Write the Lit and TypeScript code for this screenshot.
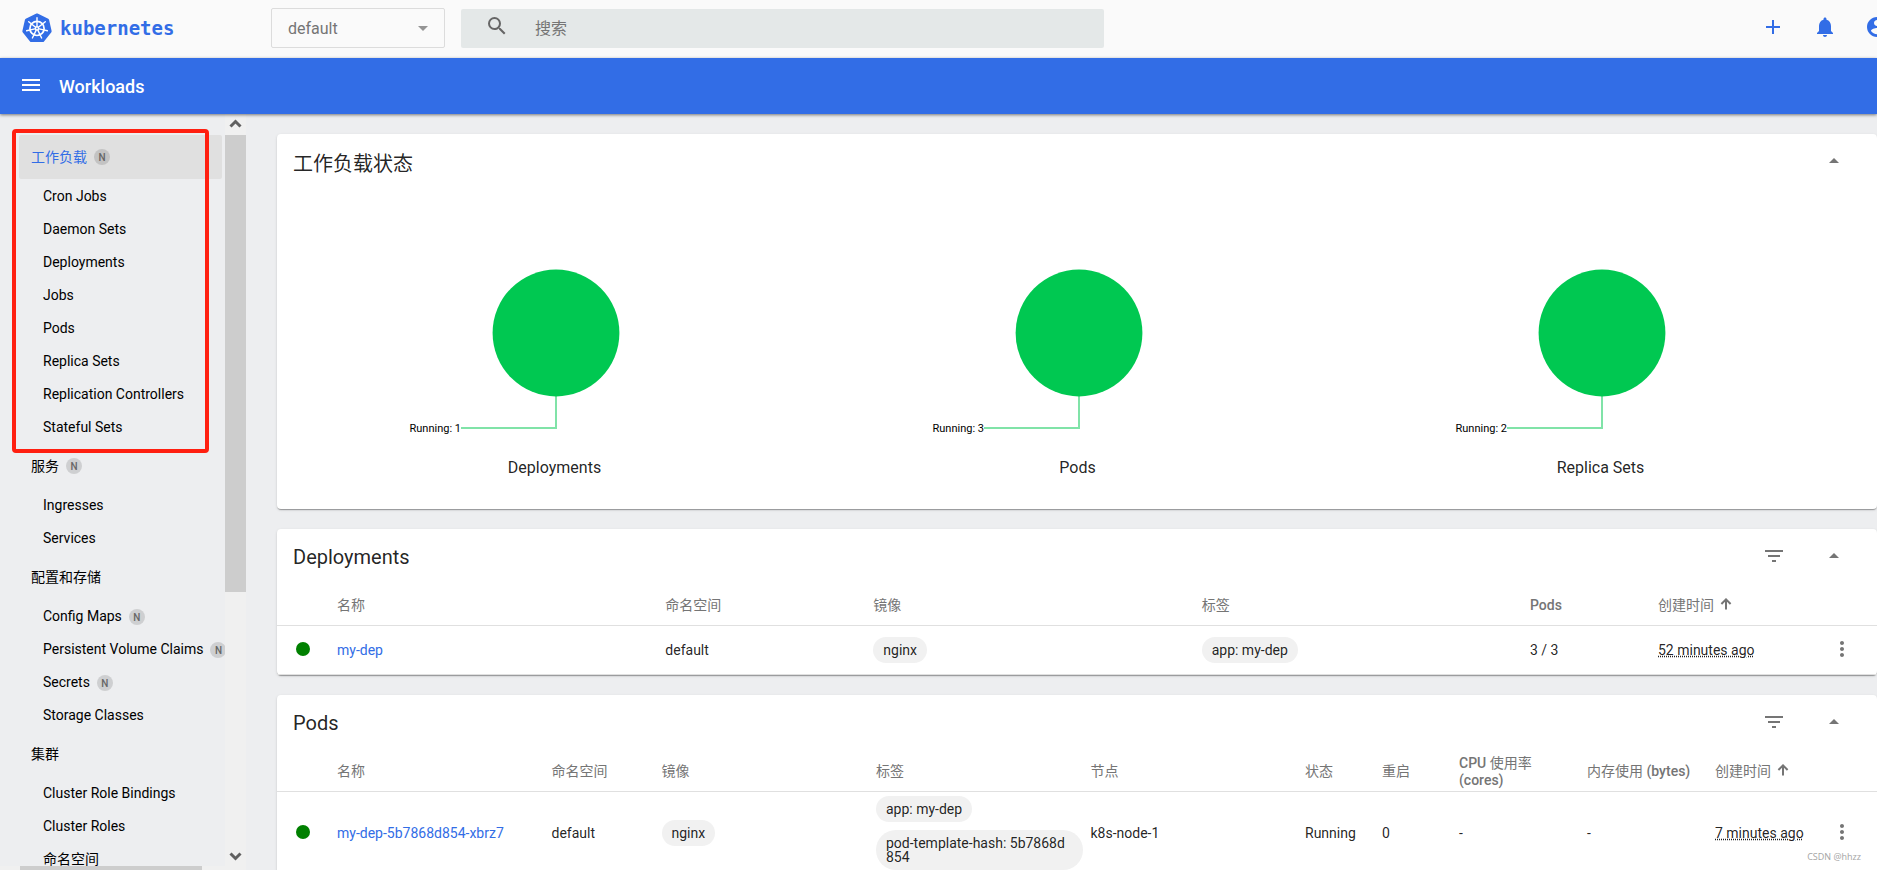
import { LitElement, html, svg, css, nothing, TemplateResult } from "lit";
import { customElement, property, state } from "lit/decorators.js";
import { classMap } from "lit/directives/class-map.js";

/* ---------- icons ---------- */

const ICONS: Record<string, string> = {
  menu: "M3 18h18v-2H3v2zm0-5h18v-2H3v2zm0-7v2h18V6H3z",
  search:
    "M15.5 14h-.79l-.28-.27A6.47 6.47 0 0 0 16 9.5 6.5 6.5 0 1 0 9.5 16c1.61 0 3.09-.59 4.23-1.57l.27.28v.79l5 4.99L20.49 19l-4.99-5zm-6 0C7.01 14 5 11.99 5 9.5S7.01 5 9.5 5 14 7.01 14 9.5 11.99 14 9.5 14z",
  add: "M19 13h-6v6h-2v-6H5v-2h6V5h2v6h6v2z",
  bell: "M12 22c1.1 0 2-.9 2-2h-4c0 1.1.89 2 2 2zm6-6v-5c0-3.07-1.64-5.64-4.5-6.32V4c0-.83-.67-1.5-1.5-1.5s-1.5.67-1.5 1.5v.68C7.63 5.36 6 7.92 6 11v5l-2 2v1h16v-1l-2-2z",
  account:
    "M12 2C6.48 2 2 6.48 2 12s4.48 10 10 10 10-4.48 10-10S17.52 2 12 2zm0 3c1.66 0 3 1.34 3 3s-1.34 3-3 3-3-1.34-3-3 1.34-3 3-3zm0 14.2c-2.5 0-4.71-1.28-6-3.22.03-1.99 4-3.08 6-3.08 1.99 0 5.97 1.09 6 3.08-1.29 1.94-3.5 3.22-6 3.22z",
  filter: "M10 18h4v-2h-4v2zM3 6v2h18V6H3zm3 7h12v-2H6v2z",
  collapse: "M7 14l5-5 5 5z",
  more: "M12 8c1.1 0 2-.9 2-2s-.9-2-2-2-2 .9-2 2 .9 2 2 2zm0 2c-1.1 0-2 .9-2 2s.9 2 2 2 2-.9 2-2-.9-2-2-2zm0 6c-1.1 0-2 .9-2 2s.9 2 2 2 2-.9 2-2-.9-2-2-2z",
};

const icon = (name: string) =>
  html`<svg class="icon" viewBox="0 0 24 24" aria-hidden="true"><path d=${ICONS[name]}></path></svg>`;

const sortArrow = html`<svg class="sort" viewBox="0 0 12 12" aria-hidden="true">
  <path d="M6 11.5V1.6M1.4 6 6 1.4 10.6 6" fill="none" stroke="currentColor" stroke-width="2"></path>
</svg>`;

const polar = (r: number, turn: number) => {
  const a = turn * Math.PI * 2 - Math.PI / 2;
  return [15 + r * Math.cos(a), 15.4 + r * Math.sin(a)];
};

const heptagon = Array.from({ length: 7 }, (_, i) => polar(13.6, i / 7).join(",")).join(" ");

const logo = html`<svg class="logo" viewBox="0 0 30 30" aria-hidden="true">
  <polygon points=${heptagon} fill="#326de6" stroke="#326de6" stroke-width="2.8" stroke-linejoin="round"></polygon>
  <circle cx="15" cy="15.4" r="7.1" fill="none" stroke="#fff" stroke-width="1.7"></circle>
  ${Array.from({ length: 7 }, (_, i) => {
    const [x1, y1] = polar(2.2, i / 7);
    const [x2, y2] = polar(10.6, i / 7);
    return svg`<line x1=${x1} y1=${y1} x2=${x2} y2=${y2} stroke="#fff" stroke-width="1.4" stroke-linecap="round"></line>`;
  })}
  <circle cx="15" cy="15.4" r="2.3" fill="#fff"></circle>
  <circle cx="15" cy="15.4" r="0.8" fill="#326de6"></circle>
</svg>`;

/* ---------- shared styles ---------- */

const base = css`
  * {
    box-sizing: border-box;
  }
  .icon {
    display: block;
    width: 24px;
    height: 24px;
    fill: currentColor;
  }
  button {
    display: flex;
    align-items: center;
    justify-content: center;
    width: 40px;
    height: 40px;
    padding: 0;
    border: 0;
    background: none;
    color: inherit;
    font: inherit;
    cursor: pointer;
  }
`;

/* ---------- data ---------- */

interface NavItem {
  label: string;
  badge?: boolean;
}
interface NavGroup extends NavItem {
  active?: boolean;
  items: NavItem[];
}

const NAV: NavGroup[] = [
  {
    label: "工作负载",
    badge: true,
    active: true,
    items: [
      { label: "Cron Jobs" },
      { label: "Daemon Sets" },
      { label: "Deployments" },
      { label: "Jobs" },
      { label: "Pods" },
      { label: "Replica Sets" },
      { label: "Replication Controllers" },
      { label: "Stateful Sets" },
    ],
  },
  { label: "服务", badge: true, items: [{ label: "Ingresses" }, { label: "Services" }] },
  {
    label: "配置和存储",
    items: [
      { label: "Config Maps", badge: true },
      { label: "Persistent Volume Claims", badge: true },
      { label: "Secrets", badge: true },
      { label: "Storage Classes" },
    ],
  },
  {
    label: "集群",
    items: [{ label: "Cluster Role Bindings" }, { label: "Cluster Roles" }, { label: "命名空间" }],
  },
];

const CHARTS = [
  { title: "Deployments", running: 1 },
  { title: "Pods", running: 3 },
  { title: "Replica Sets", running: 2 },
];

/* ---------- card ---------- */

@customElement("kd-card")
class KdCard extends LitElement {
  @property() heading = "";
  @property({ type: Boolean }) filterable = false;
  @state() private open = true;

  static styles = [
    base,
    css`
      :host {
        display: block;
        flex: none;
        border-radius: 4px;
        background: #fff;
        box-shadow: 0 2px 1px -1px rgba(0, 0, 0, 0.2), 0 1px 1px rgba(0, 0, 0, 0.14), 0 1px 3px rgba(0, 0, 0, 0.12);
      }
      .head {
        display: flex;
        align-items: center;
        height: 56px;
        padding: 0 23px 0 16px;
      }
      .title {
        flex: 1;
        margin: 0;
        font-size: 20px;
        line-height: 24px;
        font-weight: 400;
      }
      .title:lang(zh) {
        padding-top: 4px;
      }
      .actions {
        display: flex;
        gap: 20px;
        padding-bottom: 2px;
        color: #757575;
      }
    `,
  ];

  render() {
    return html`
      <div class="head">
        <h2 class="title">${this.heading}</h2>
        <div class="actions">
          ${this.filterable ? html`<button aria-label="filter">${icon("filter")}</button>` : nothing}
          <button aria-label="collapse" @click=${() => (this.open = !this.open)}>${icon("collapse")}</button>
        </div>
      </div>
      ${this.open ? html`<slot></slot>` : nothing}
    `;
  }
}

/* ---------- status chart ---------- */

@customElement("kd-status-chart")
class KdStatusChart extends LitElement {
  @property() heading = "";
  @property({ type: Number }) running = 0;

  static styles = css`
    :host {
      display: flex;
      flex-direction: column;
      align-items: center;
    }
    .chart {
      display: block;
      width: 320px;
      height: 266px;
    }
    .label {
      font-size: 11px;
      fill: #000;
    }
    .name {
      font-size: 16px;
      line-height: 24px;
    }
  `;

  render() {
    return html`
      <svg class="chart" viewBox="0 0 320 266">
        <path
          d="M161 206V238H66"
          fill="none"
          stroke="#80e3a8"
          stroke-width="2"
          shape-rendering="crispEdges"
        ></path>
        <circle cx="161" cy="143" r="63.4" fill="#00c851"></circle>
        <text class="label" x="66" y="242" text-anchor="end">Running: ${this.running}</text>
      </svg>
      <div class="name">${this.heading}</div>
    `;
  }
}

/* ---------- application ---------- */

@customElement("app-root")
class AppRoot extends LitElement {
  static styles = [
    base,
    css`
      :host {
        display: flex;
        flex-direction: column;
        height: 100vh;
        position: relative;
        overflow: hidden;
        background: #edeef0;
        color: rgba(0, 0, 0, 0.87);
        font-family: Roboto, "Noto Sans CJK SC", sans-serif;
        font-size: 14px;
        line-height: 17px;
      }
      a {
        color: #326de6;
        text-decoration: none;
      }

      /* top bar */
      .top {
        display: flex;
        align-items: center;
        flex: none;
        height: 58px;
        padding: 0 0 2px 22px;
        background: #fafafa;
      }
      .brand {
        display: flex;
        align-items: center;
        gap: 8px;
        width: 249px;
        font-family: "DejaVu Sans Mono", monospace;
        font-size: 19px;
        line-height: 24px;
        font-weight: 700;
      }
      .logo {
        width: 30px;
        height: 30px;
      }
      .namespace {
        display: flex;
        align-items: center;
        position: relative;
        width: 174px;
        margin-right: 16px;
      }
      .namespace select {
        appearance: none;
        width: 100%;
        height: 40px;
        padding: 0 16px;
        border: 1px solid #dcdcdc;
        border-radius: 2px;
        background: none;
        color: #757575;
        font: inherit;
        font-size: 16px;
      }
      .caret {
        position: absolute;
        right: 17px;
        border: 5px solid transparent;
        border-top-color: #949494;
        border-bottom: 0;
        pointer-events: none;
      }
      .search {
        display: flex;
        align-items: center;
        gap: 26px;
        flex: 0 1 643px;
        height: 39px;
        margin-top: 1px;
        padding-left: 24px;
        border-radius: 2px;
        background: #e4e8e8;
        color: #666;
      }
      .search .icon {
        flex: none;
        margin-bottom: 5px;
      }
      .search input {
        flex: 1;
        min-width: 0;
        height: 39px;
        padding: 0;
        border: 0;
        outline: 0;
        background: none;
        color: inherit;
        font: inherit;
        font-size: 16px;
      }
      .search input::placeholder {
        color: #757575;
      }
      .tools {
        display: flex;
        gap: 12px;
        margin-left: auto;
        margin-right: -20px;
        padding-bottom: 2px;
        color: #326de6;
      }

      /* title bar */
      .bar {
        display: flex;
        align-items: center;
        flex: none;
        gap: 8px;
        height: 56px;
        padding-left: 11px;
        background: #326de6;
        color: #fff;
        box-shadow: 0 1px 3px rgba(0, 0, 0, 0.5);
        position: relative;
      }
      .bar button {
        padding-bottom: 2px;
      }
      .bar h1 {
        margin: 0;
        padding-top: 1px;
        font-size: 18px;
        line-height: 24px;
        font-weight: 500;
      }

      /* body */
      .body {
        display: flex;
        flex: 1;
        min-height: 0;
      }
      .side {
        display: grid;
        grid-template-columns: 225px 21px;
        grid-template-rows: minmax(0, 1fr) 4px;
        flex: none;
      }
      .nav {
        padding: 21px 0 0 19px;
        overflow: hidden;
      }
      .group {
        width: 203px;
        margin-bottom: 1px;
      }
      .entry {
        display: flex;
        align-items: center;
        gap: 7px;
        height: 33px;
        padding: 2px 0 0 24px;
        color: #000;
        white-space: nowrap;
      }
      .entry.header {
        height: 44px;
        padding: 0 0 0 12px;
      }
      .entry.active {
        border-radius: 2px;
        background: #e0e0e0;
        color: #326de6;
      }
      .badge {
        flex: none;
        width: 16px;
        height: 16px;
        border-radius: 8px;
        background: rgba(0, 0, 0, 0.13);
        color: #666;
        font-size: 10px;
        line-height: 17px;
        font-weight: 500;
        text-align: center;
      }
      .track {
        display: flex;
        flex-direction: column;
        align-items: center;
        grid-row: 1 / 3;
        grid-column: 2;
        background: #f0f0f0;
      }
      .track svg {
        flex: none;
        width: 21px;
        height: 21px;
        fill: none;
        stroke: #606060;
        stroke-width: 3;
      }
      .rail {
        flex: 1;
        width: 100%;
      }
      .thumb {
        height: 64%;
        background: #cdcdcd;
      }
      .hrail {
        grid-row: 2;
        padding: 0 23px 0 20px;
        background: #f0f0f0;
      }
      .hthumb {
        height: 4px;
        background: #cdcdcd;
      }
      .main {
        display: flex;
        flex-direction: column;
        gap: 20px;
        flex: 1;
        min-width: 0;
        padding: 20px 0 0 31px;
        overflow: hidden;
      }
      .charts {
        display: grid;
        grid-template-columns: repeat(3, 1fr);
        padding: 0 15px 29px 16px;
      }

      /* tables */
      table {
        width: 100%;
        table-layout: fixed;
        border-spacing: 0;
      }
      th,
      td {
        padding: 0 8px 0 0;
        border-bottom: 1px solid #e0e0e0;
        text-align: left;
        font-weight: 400;
      }
      th {
        height: 41px;
        padding-top: 1px;
        color: #757575;
      }
      td {
        height: 49px;
      }
      th span {
        font-weight: 500;
      }
      .c-dot {
        width: 60px;
      }
      .c-ns {
        width: 13%;
      }
      .c-fixed {
        width: 128px;
      }
      .c-age {
        width: 168px;
      }
      .c-more {
        width: 51px;
      }
      .pods .c-ns {
        width: 110px;
      }
      .pods .c-short {
        width: 77px;
      }
      .pods .c-age {
        width: 111px;
      }
      .dot {
        width: 14px;
        height: 14px;
        margin-left: 19px;
        margin-bottom: 2px;
        border-radius: 7px;
        background: #008000;
      }
      .chips {
        display: flex;
        flex-direction: column;
        align-items: flex-start;
        gap: 8px;
        padding: 4px 0;
      }
      .chip {
        padding: 6px 10px;
        border-radius: 20px;
        background: #f1f1f1;
        line-height: 14px;
        word-break: break-all;
      }
      time {
        text-decoration: underline dotted;
        white-space: nowrap;
      }
      .sort {
        display: inline-block;
        width: 12px;
        height: 12px;
        margin-left: 6px;
      }
      td button {
        width: 24px;
        margin-left: 4px;
        padding-bottom: 2px;
        color: #757575;
      }

      /* overlays */
      .callout {
        position: absolute;
        left: 12px;
        top: 129px;
        width: 197px;
        height: 324px;
        border: 4px solid #ff1f10;
        border-radius: 4px;
        pointer-events: none;
      }
      .credit {
        position: absolute;
        right: 16px;
        bottom: 6px;
        color: #a4a4a4;
        font-family: "Open Sans", sans-serif;
        font-size: 9px;
        line-height: 14px;
      }
    `,
  ];

  private entry(item: NavItem, classes: Record<string, boolean> = {}): TemplateResult {
    return html`<a class=${classMap({ entry: true, ...classes })} href="#">
      ${item.label}${item.badge ? html`<span class="badge">N</span>` : nothing}
    </a>`;
  }

  private chips(labels: string[]) {
    return html`<div class="chips">${labels.map((l) => html`<div class="chip">${l}</div>`)}</div>`;
  }

  private dot = html`<div class="dot" role="img" aria-label="Running"></div>`;
  private more = html`<button aria-label="more">${icon("more")}</button>`;

  render() {
    return html`
      <header class="top">
        <a class="brand" href="#">${logo}kubernetes</a>
        <label class="namespace">
          <select aria-label="namespace">
            <option>default</option>
          </select>
          <span class="caret"></span>
        </label>
        <label class="search">
          ${icon("search")}
          <input type="text" placeholder="搜索" aria-label="搜索" />
        </label>
        <div class="tools">
          <button aria-label="create">${icon("add")}</button>
          <button aria-label="notifications">${icon("bell")}</button>
          <button aria-label="account">${icon("account")}</button>
        </div>
      </header>
      <div class="bar">
        <button aria-label="menu">${icon("menu")}</button>
        <h1>Workloads</h1>
      </div>
      <div class="body">
        <div class="side">
          <nav class="nav">
            ${NAV.map(
              (g) => html`<div class="group">
                ${this.entry(g, { header: true, active: !!g.active })}${g.items.map((i) => this.entry(i))}
              </div>`
            )}
          </nav>
          <div class="track" aria-hidden="true">
            <svg viewBox="0 0 21 21"><path d="M5.5 12.5l5-5 5 5"></path></svg>
            <div class="rail"><div class="thumb"></div></div>
            <svg viewBox="0 0 21 21"><path d="M5.5 4.5l5 5 5-5"></path></svg>
          </div>
          <div class="hrail" aria-hidden="true"><div class="hthumb"></div></div>
        </div>
        <main class="main">
          <kd-card lang="zh" heading="工作负载状态">
            <div class="charts">
              ${CHARTS.map((c) => html`<kd-status-chart heading=${c.title} running=${c.running}></kd-status-chart>`)}
            </div>
          </kd-card>

          <kd-card heading="Deployments" filterable>
            <table>
              <colgroup>
                <col class="c-dot" /><col /><col class="c-ns" /><col /><col />
                <col class="c-fixed" /><col class="c-age" /><col class="c-more" />
              </colgroup>
              <thead>
                <tr>
                  <th></th>
                  <th>名称</th>
                  <th>命名空间</th>
                  <th>镜像</th>
                  <th>标签</th>
                  <th><span>Pods</span></th>
                  <th>创建时间${sortArrow}</th>
                  <th></th>
                </tr>
              </thead>
              <tbody>
                <tr>
                  <td>${this.dot}</td>
                  <td><a href="#">my-dep</a></td>
                  <td>default</td>
                  <td>${this.chips(["nginx"])}</td>
                  <td>${this.chips(["app: my-dep"])}</td>
                  <td>3 / 3</td>
                  <td><time>52 minutes ago</time></td>
                  <td>${this.more}</td>
                </tr>
              </tbody>
            </table>
          </kd-card>

          <kd-card heading="Pods" filterable>
            <table class="pods">
              <colgroup>
                <col class="c-dot" /><col /><col class="c-ns" /><col /><col /><col />
                <col class="c-short" /><col class="c-short" /><col class="c-fixed" /><col class="c-fixed" />
                <col class="c-age" /><col class="c-more" />
              </colgroup>
              <thead>
                <tr>
                  <th></th>
                  <th>名称</th>
                  <th>命名空间</th>
                  <th>镜像</th>
                  <th>标签</th>
                  <th>节点</th>
                  <th>状态</th>
                  <th>重启</th>
                  <th><span>CPU</span> 使用率 <span>(cores)</span></th>
                  <th>内存使用 <span>(bytes)</span></th>
                  <th>创建时间${sortArrow}</th>
                  <th></th>
                </tr>
              </thead>
              <tbody>
                <tr>
                  <td>${this.dot}</td>
                  <td><a href="#">my-dep-5b7868d854-xbrz7</a></td>
                  <td>default</td>
                  <td>${this.chips(["nginx"])}</td>
                  <td>${this.chips(["app: my-dep", "pod-template-hash: 5b7868d854"])}</td>
                  <td>k8s-node-1</td>
                  <td>Running</td>
                  <td>0</td>
                  <td>-</td>
                  <td>-</td>
                  <td><time>7 minutes ago</time></td>
                  <td>${this.more}</td>
                </tr>
              </tbody>
            </table>
          </kd-card>
        </main>
      </div>
      <div class="callout"></div>
      <div class="credit">CSDN @hhzz</div>
    `;
  }
}
